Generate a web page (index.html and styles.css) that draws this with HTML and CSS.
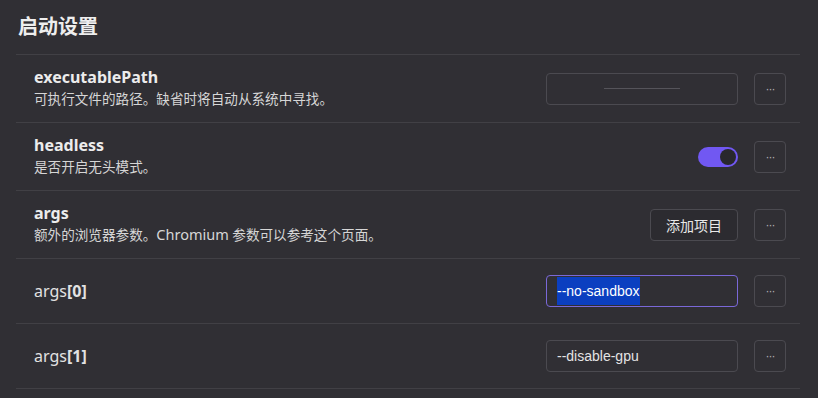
FILE: index.html
```html
<!DOCTYPE html>
<html lang="zh-CN">
<head>
  <meta charset="UTF-8">
  <title>启动设置</title>
  <link rel="stylesheet" href="styles.css">
</head>
<body>

<div class="settings">
  <h2 class="group-title">启动设置</h2>

  <!-- executablePath -->
  <div class="row">
    <div class="info">
      <div class="name">executablePath</div>
      <div class="desc">可执行文件的路径。缺省时将自动从系统中寻找。</div>
    </div>
    <div class="control">
      <div class="input empty"><span class="placeholder"></span></div>
      <button class="more">···</button>
    </div>
  </div>

  <!-- headless -->
  <div class="row">
    <div class="info">
      <div class="name">headless</div>
      <div class="desc">是否开启无头模式。</div>
    </div>
    <div class="control">
      <div class="switch on"><span class="knob"></span></div>
      <button class="more">···</button>
    </div>
  </div>

  <!-- args -->
  <div class="row">
    <div class="info">
      <div class="name">args</div>
      <div class="desc">额外的浏览器参数。<span class="latin">Chromium</span> 参数可以参考这个页面。</div>
    </div>
    <div class="control">
      <button class="btn">添加项目</button>
      <button class="more">···</button>
    </div>
  </div>

  <div class="row item">
    <div class="info">
      <div class="key">args<b>[0]</b></div>
    </div>
    <div class="control">
      <div class="input focused"><span class="selected">--no-sandbox</span></div>
      <button class="more">···</button>
    </div>
  </div>

  <div class="row item last">
    <div class="info">
      <div class="key">args<b>[1]</b></div>
    </div>
    <div class="control">
      <div class="input">--disable-gpu</div>
      <button class="more">···</button>
    </div>
  </div>
</div>

</body>
</html>
```

FILE: styles.css
```css
body {
  margin: 0;
  background: #302f34;
  color: #e6e6e6;
  font-family: "Noto Sans", "Noto Sans CJK SC", sans-serif;
}
.settings {
  padding: 0 18px 0 16px;
}
.group-title {
  margin: 0;
  padding: 13px 0 13px 2px;
  font-size: 20px;
  line-height: 28px;
  font-weight: bold;
  color: #eeeeee;
}
.row {
  display: flex;
  align-items: center;
  justify-content: space-between;
  border-top: 1px solid #414045;
  padding: 12px 14px 12px 18px;
  height: 43px;
}
.row.item {
  padding: 16px 14px 16px 18px;
  height: 32px;
}
.row.last {
  border-bottom: 1px solid #414045;
}
.name {
  font-size: 16px;
  font-weight: bold;
  line-height: 20px;
  color: #ececec;
}
.desc {
  font-size: 13.6px;
  line-height: 23px;
  color: #d6d6d6;
}
.desc .latin {
  font-size: 14.5px;
}
.key {
  font-size: 16px;
  color: #e2e2e2;
}
.key b {
  font-weight: bold;
}
.control {
  display: flex;
  align-items: center;
  gap: 16px;
}
.input {
  box-sizing: border-box;
  width: 192px;
  height: 32px;
  border: 1px solid #4b4a50;
  border-radius: 4px;
  padding: 0 10px;
  display: flex;
  align-items: center;
  font-family: "Liberation Sans", Arial, sans-serif;
  font-size: 14px;
  color: #e4e4e4;
}
.input.empty {
  justify-content: center;
}
.placeholder {
  display: block;
  width: 76px;
  height: 1px;
  background: #55545a;
}
.input.focused {
  border-color: #7a68d8;
}
.selected {
  background: #0b3fc0;
  color: #ffffff;
  line-height: 28px;
}
.more {
  box-sizing: border-box;
  width: 32px;
  height: 32px;
  border: 1px solid #4b4a50;
  border-radius: 4px;
  background: transparent;
  color: #b0b0b0;
  font-size: 12px;
  letter-spacing: -1px;
  padding: 0;
  cursor: pointer;
}
.btn {
  box-sizing: border-box;
  height: 32px;
  padding: 0 15px;
  border: 1px solid #4b4a50;
  border-radius: 4px;
  background: #2c2b30;
  color: #e8e8e8;
  font-family: "Noto Sans CJK SC", sans-serif;
  font-size: 14px;
  cursor: pointer;
}
.switch {
  box-sizing: border-box;
  width: 40px;
  height: 20px;
  border-radius: 10px;
  background: #7158f2;
  padding: 2px;
  display: flex;
  justify-content: flex-end;
}
.knob {
  width: 16px;
  height: 16px;
  border-radius: 50%;
  background: #29282d;
}
```
